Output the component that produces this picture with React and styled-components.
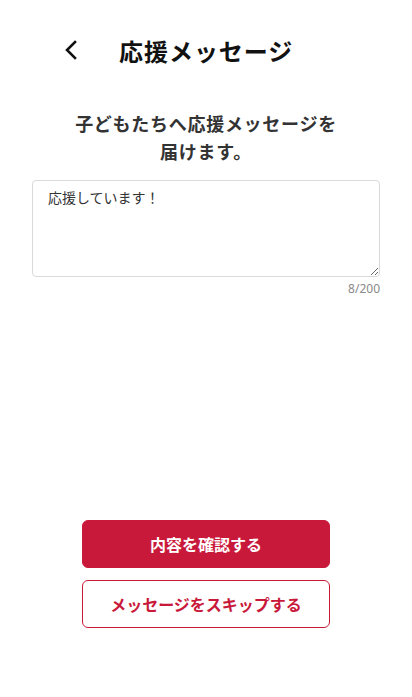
import React, { useState } from "react";
import styled, { createGlobalStyle } from "styled-components";

const GlobalStyle = createGlobalStyle`
  * { box-sizing: border-box; }
  html, body { margin: 0; padding: 0; background: #fff; }
  body {
    font-family: "Noto Sans CJK JP", "Noto Sans", sans-serif;
    color: #222;
  }
`;

const Page = styled.div`
  min-height: 697px;
  display: flex;
  flex-direction: column;
`;

const Header = styled.header`
  height: 100px;
  display: flex;
  align-items: center;
  padding-left: 58px;
`;

const BackButton = styled.button`
  width: 26px;
  height: 30px;
  border: none;
  background: none;
  padding: 0;
  display: flex;
  align-items: center;
  justify-content: center;
  cursor: pointer;
  color: #111;
`;

const Title = styled.h1`
  margin: 0 0 0 35px;
  font-size: 24px;
  font-weight: 700;
  letter-spacing: 0.04em;
  color: #111;
`;

const Lead = styled.p`
  margin: 9px 0 0;
  text-align: center;
  font-size: 18px;
  line-height: 28px;
  font-weight: 700;
  letter-spacing: 0.04em;
  color: #333;
`;

const Field = styled.div`
  margin: 15px 32px 0;
  display: flex;
  flex-direction: column;
`;

const TextArea = styled.textarea`
  width: 100%;
  height: 97px;
  border: 1px solid #d9d9d9;
  border-radius: 4px;
  padding: 6px 15px;
  font-family: inherit;
  font-size: 14px;
  line-height: 21px;
  color: #333;
  resize: vertical;
  outline: none;
  display: block;
`;

const Counter = styled.div`
  margin-top: 3px;
  text-align: right;
  font-family: "Noto Sans", sans-serif;
  font-size: 12px;
  line-height: 18px;
  color: #8a8a8a;
`;

const Spacer = styled.div`
  flex: 1;
`;

const Actions = styled.div`
  display: flex;
  flex-direction: column;
  align-items: center;
  gap: 12px;
  padding-bottom: 69px;
`;

const Button = styled.button`
  width: 248px;
  height: 48px;
  border-radius: 6px;
  border: 1px solid #c9193a;
  background: ${(p) => (p.$primary ? "#c9193a" : "#fff")};
  color: ${(p) => (p.$primary ? "#fff" : "#c9193a")};
  font-family: inherit;
  font-size: 16px;
  font-weight: 700;
  cursor: pointer;
`;

export default function App() {
  const [text, setText] = useState("応援しています！");
  return (
    <Page>
      <GlobalStyle />
      <Header>
        <BackButton aria-label="戻る">
          <svg width="16" height="20" viewBox="0 0 16 20" fill="none">
            <path d="M12 2 L4 10 L12 18" stroke="currentColor" strokeWidth="2.6" strokeLinecap="square" />
          </svg>
        </BackButton>
        <Title>応援メッセージ</Title>
      </Header>
      <Lead>
        子どもたちへ応援メッセージを
        <br />
        届けます。
      </Lead>
      <Field>
        <TextArea value={text} onChange={(e) => setText(e.target.value)} maxLength={200} />
        <Counter>{text.length}/200</Counter>
      </Field>
      <Spacer />
      <Actions>
        <Button $primary>内容を確認する</Button>
        <Button>メッセージをスキップする</Button>
      </Actions>
    </Page>
  );
}
